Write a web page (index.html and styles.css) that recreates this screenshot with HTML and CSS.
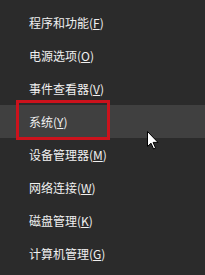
FILE: index.html
```html
<!DOCTYPE html>
<html lang="zh-CN">
<head>
    <meta charset="UTF-8">
    <title>快速链接菜单</title>
    <link rel="stylesheet" href="styles.css">
</head>
<body>
    <ul class="menu">
        <li class="menu-item">程序和功能(<u>F</u>)</li>
        <li class="menu-item">电源选项(<u>O</u>)</li>
        <li class="menu-item">事件查看器(<u>V</u>)</li>
        <li class="menu-item hover">系统(<u>Y</u>)</li>
        <li class="menu-item">设备管理器(<u>M</u>)</li>
        <li class="menu-item">网络连接(<u>W</u>)</li>
        <li class="menu-item">磁盘管理(<u>K</u>)</li>
        <li class="menu-item">计算机管理(<u>G</u>)</li>
    </ul>

    <!-- annotation box round the hovered item -->
    <div class="mark"></div>

    <svg class="cursor" width="12" height="19" viewBox="0 0 12 19">
        <path d="M0.5 0.5 L0.5 15.5 L4 12.2 L6.6 18 L8.6 17.1 L6.1 11.4 L11 11.4 Z" fill="#fff" stroke="#000" stroke-width="1"/>
    </svg>
</body>
</html>
```

FILE: styles.css
```css
body {
    margin: 0;
    background-color: #2b2b2b;
    font-family: "Noto Sans CJK SC", "Liberation Sans", sans-serif;
    width: 205px;
    height: 275px;
    overflow: hidden;
}
.menu {
    list-style: none;
    margin: 0;
    padding: 6px 0 0 0;
}
.menu-item {
    height: 33px;
    line-height: 33px;
    padding-left: 29px;
    color: #f0f0f0;
    font-size: 12px;
}
.menu-item u {
    text-underline-offset: 1px;
}
.hover {
    background-color: #404040;
}
.mark {
    position: absolute;
    left: 16px;
    top: 100px;
    width: 88px;
    height: 34px;
    border: 3px solid #cc121c;
}
.cursor {
    position: absolute;
    left: 147px;
    top: 131px;
}
```
